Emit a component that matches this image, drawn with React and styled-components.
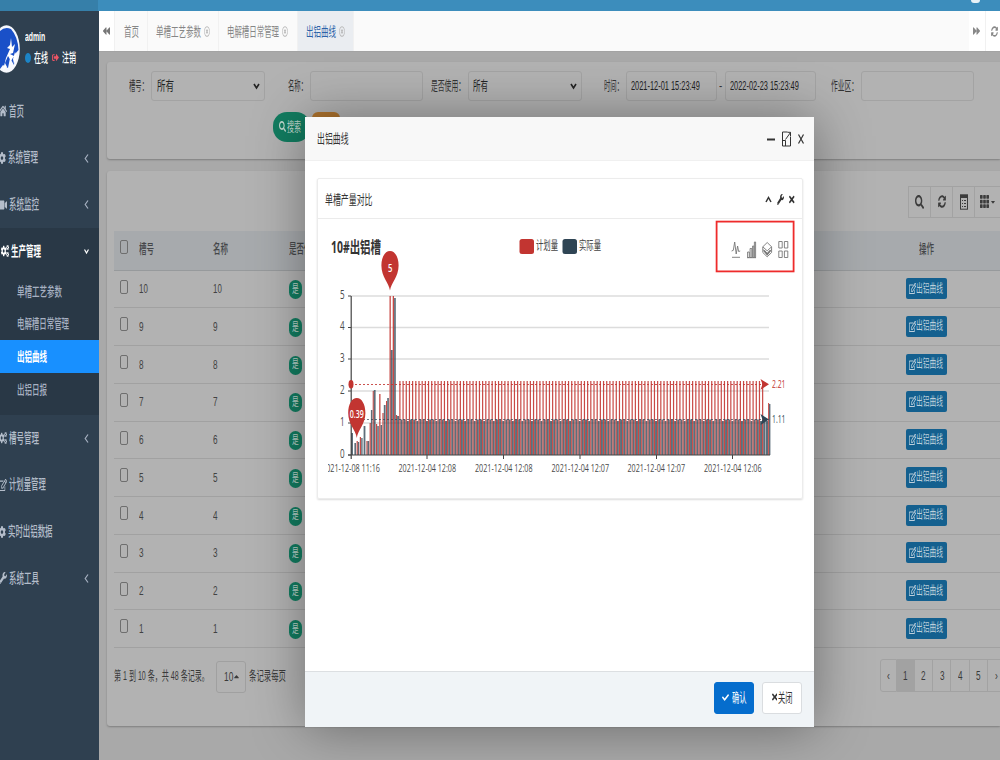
import React, { useLayoutEffect, useRef, useState } from 'react';
import styled, { createGlobalStyle, css } from 'styled-components';
import {
  FaHome, FaCog, FaCogs, FaVideo, FaRegEdit, FaWrench, FaSearch, FaCheck, FaTimes,
  FaRegTimesCircle, FaBackward, FaForward, FaSyncAlt, FaTh, FaSignOutAlt,
  FaCaretUp, FaCaretDown,
} from 'react-icons/fa';

const sans = '"Liberation Sans", "Noto Sans CJK SC", sans-serif';
const chartFont = '"Open Sans", "Noto Sans CJK SC", sans-serif';

const Global = createGlobalStyle`
  * { box-sizing: border-box; }
  html, body { margin: 0; padding: 0; }
  body { width: 1000px; height: 760px; overflow: hidden; font-family: ${sans}; background: #aaa; }
  svg { display: block; flex: none; }
`;

/* Condensed label: the text is scaled horizontally to the given width. */
const LabelBox = styled.span`
  display: inline-block;
  flex: none;
  width: ${(p) => p.$w}px;
  height: ${(p) => p.$size + 6}px;
  line-height: ${(p) => p.$size + 6}px;
  font-size: ${(p) => p.$size}px;
  font-weight: ${(p) => p.$weight || 400};
  color: ${(p) => p.$color || 'inherit'};
  white-space: nowrap;
`;
const LabelInk = styled.span`
  display: inline-block;
  transform-origin: 0 50%;
`;
function T({ w, size = 13, color, weight, children }) {
  const ref = useRef(null);
  const [k, setK] = useState(0.6);
  useLayoutEffect(() => {
    if (ref.current) setK(w / ref.current.offsetWidth);
  }, [w, children]);
  return (
    <LabelBox $w={w} $size={size} $color={color} $weight={weight}>
      <LabelInk ref={ref} style={{ transform: `scaleX(${k})` }}>{children}</LabelInk>
    </LabelBox>
  );
}
const IconBox = styled.span`
  flex: none;
  width: ${(p) => p.$w}px;
  height: ${(p) => p.$h}px;
  color: ${(p) => p.$color || 'inherit'};
  svg { width: 100%; height: 100%; }
`;
function Icon({ as: Glyph, w = 8, h = 13, color }) {
  return <IconBox $w={w} $h={h} $color={color}><Glyph preserveAspectRatio="none" /></IconBox>;
}

const Screen = styled.div`
  position: relative;
  width: 1000px;
  height: 760px;
  overflow: hidden;
  display: flex;
  flex-direction: column;
`;
const TopBar = styled.header`
  flex: none;
  height: 11px;
  background: linear-gradient(90deg, #367fa9 0 98px, #3c8dbc 98px);
  display: flex;
  justify-content: flex-end;
  padding-right: 20px;
`;
const Badge = styled.span`
  width: 9px;
  height: 3px;
  background: #e8f1f6;
  border-radius: 0 0 5px 5px;
`;
const Body = styled.div`
  flex: 1;
  display: flex;
  min-height: 0;
`;
const Sidebar = styled.aside`
  flex: none;
  width: 98.5px;
  background: #2f4050;
  color: #a7b1c2;
  overflow: hidden;
`;
const Profile = styled.div`
  height: 77px;
  display: flex;
  color: #fff;
`;
const Avatar = styled.div`
  margin: 14px 0 0 -7px;
  width: 27px;
  height: 48px;
  flex: none;
`;
const ProfileText = styled.div`
  padding: 16px 0 0 5px;
`;
const StatusLine = styled.div`
  display: flex;
  align-items: center;
  margin-top: 2px;
`;
const Dot = styled.i`
  width: 6px;
  height: 10px;
  border-radius: 50%;
  background: #1c84c6;
  margin-right: 3px;
`;
const Gap = styled.i`
  flex: none;
  width: ${(p) => p.$w}px;
`;
const MenuItem = styled.div`
  height: 46.7px;
  display: flex;
  align-items: center;
  gap: 2px;
  padding-right: 10px;
  margin-left: ${(p) => p.$shift || 0}px;
  color: ${(p) => (p.$active ? '#fff' : '#b4bdca')};
`;
const Group = styled.div`
  height: 187px;
  background: #293846;
`;
const SubItem = styled.div`
  height: 32.7px;
  display: flex;
  align-items: center;
  padding-left: 16.5px;
  color: ${(p) => (p.$active ? '#fff' : '#a7b1c2')};
  background: ${(p) => (p.$active ? '#1890ff' : 'transparent')};
`;
const Push = styled.i`flex: 1;`;

const Main = styled.main`
  flex: 1;
  min-width: 0;
  display: flex;
  flex-direction: column;
`;
const Tabs = styled.nav`
  flex: none;
  height: 40px;
  display: flex;
  background: #fafafa;
  color: #999;
`;
const Tab = styled.div`
  width: ${(p) => p.$w}px;
  flex: none;
  display: flex;
  align-items: center;
  justify-content: center;
  gap: 3px;
  border-right: 1px solid ${(p) => (p.$plain ? 'transparent' : '#f1f1f1')};
  background: ${(p) => (p.$active ? '#eaedf1' : p.$white ? '#fff' : 'transparent')};
  color: ${(p) => (p.$active ? '#2d62a8' : '#868686')};
`;
const Content = styled.section`
  flex: 1;
  background: #a9a9a9;
  padding: 10px 0 0 8.5px;
  display: flex;
  flex-direction: column;
  gap: 12px;
  border-top: 1px solid #a3a3a3;
`;
const panel = css`
  background: #b2b2b2;
  border-radius: 3px 0 0 3px;
  box-shadow: 0 1px 2px rgba(0, 0, 0, 0.25);
`;
const FilterPanel = styled.div`
  ${panel}
  height: 97px;
  padding-top: 9px;
  color: #333;
`;
const FilterRow = styled.div`
  height: 30px;
  display: flex;
  align-items: center;
  padding-left: 22px;
`;
const Field = styled.div`
  width: ${(p) => p.$w}px;
  height: 30px;
  flex: none;
  border: 1px solid #a3a3a3;
  border-radius: 3px;
  display: flex;
  align-items: center;
  padding: 0 4px 1px;
  color: #222;
`;
const FieldLabel = styled.span`
  padding: 0 3px 2px 0;
  display: flex;
`;
const ButtonRow = styled.div`
  display: flex;
  gap: 2px;
  padding: 11px 0 0 166px;
`;
const RoundButton = styled.div`
  width: ${(p) => p.$w}px;
  height: 30px;
  border-radius: ${(p) => p.$r}px;
  background: ${(p) => p.$bg};
  color: #bfd6cd;
  display: flex;
  align-items: center;
  gap: 1px;
  padding: 0 0 2px 6px;
`;
const TablePanel = styled.div`
  ${panel}
  height: 555px;
  padding-left: 7px;
  display: flex;
  flex-direction: column;
`;
const ToolRow = styled.div`
  height: 59.5px;
  padding: 15px 0 0 794px;
  display: flex;
  flex: none;
`;
const ToolButton = styled.div`
  width: ${(p) => p.$w || 22}px;
  height: 32px;
  flex: none;
  border: 1px solid #a2a2a2;
  border-left-width: ${(p) => (p.$first ? 1 : 0)}px;
  display: flex;
  align-items: center;
  justify-content: center;
  gap: 2px;
  padding-bottom: 1px;
  color: #3c3c3c;
`;
const Row = styled.div`
  flex: none;
  height: ${(p) => (p.$head ? 40 : 37.75)}px;
  background: ${(p) => (p.$head ? '#a7aaad' : 'transparent')};
  border-bottom: 1px solid ${(p) => (p.$head ? '#979a9c' : '#a1a1a1')};
  display: grid;
  grid-template-columns: 25px 74px 76px 574px 126px 1fr;
  align-items: center;
  padding-bottom: ${(p) => (p.$head ? 3 : 0.5)}px;
  color: ${(p) => (p.$head ? '#454749' : '#424242')};
`;
const Check = styled.i`
  width: 8px;
  height: 14px;
  margin: -4px 0 0 6px;
  border: 1px solid #6e6e6e;
  border-radius: 2px;
  display: block;
`;
const Yes = styled.span`
  width: 13px;
  height: 19px;
  border-radius: 7px;
  background: #127c60;
  color: #bfd3cc;
  display: flex;
  align-items: center;
  justify-content: center;
  margin-top: 2px;
`;
const Center = styled.div`
  display: flex;
  justify-content: center;
`;
const CurveButton = styled.span`
  width: 41px;
  height: 21px;
  border-radius: 2px;
  background: #14608f;
  color: #bccfdc;
  display: flex;
  align-items: center;
  justify-content: center;
`;
const TableFoot = styled.div`
  display: flex;
  align-items: center;
  height: 54px;
  color: #3a3a3a;
`;
const SizeButton = styled.span`
  flex: none;
  width: 30px;
  height: 32px;
  margin: 3px 3px 0 7px;
  border: 1px solid #a0a0a0;
  border-radius: 3px;
  display: flex;
  align-items: center;
  justify-content: center;
  gap: 1px;
`;
const Pager = styled.div`
  display: flex;
  margin-left: 594px;
`;
const PageCell = styled.span`
  width: ${(p) => p.$w || 18.2}px;
  height: 33px;
  flex: none;
  border: 1px solid #a2a2a2;
  border-left-width: ${(p) => (p.$first ? 1 : 0)}px;
  background: ${(p) => (p.$active ? '#a2a2a2' : 'transparent')};
  border-radius: ${(p) => (p.$first ? '3px 0 0 3px' : 0)};
  display: flex;
  align-items: center;
  justify-content: center;
`;

const Modal = styled.div`
  position: absolute;
  left: 305px;
  top: 117px;
  width: 509px;
  height: 610px;
  background: #fff;
  display: flex;
  flex-direction: column;
  box-shadow: 1px 1px 50px rgba(0, 0, 0, 0.38);
  color: #333;
`;
const ModalTitle = styled.div`
  flex: none;
  height: 44px;
  background: #f8f8f8;
  border-bottom: 1px solid #f0f0f0;
  display: flex;
  align-items: center;
  padding: 0 9px 0 11.5px;
`;
const ModalBody = styled.div`
  flex: 1;
  padding: 17px 11px 0 12px;
`;
const Card = styled.div`
  height: 321px;
  border: 1px solid #ececec;
  border-radius: 2px;
  box-shadow: 0 1px 2px rgba(0, 0, 0, 0.14);
`;
const CardHead = styled.div`
  height: 40px;
  border-bottom: 1px solid #ebebeb;
  display: flex;
  align-items: center;
  padding: 2px 7.5px 0 7px;
`;
const ModalFoot = styled.div`
  flex: none;
  height: 56px;
  background: #f0f4f7;
  border-top: 1px solid #dcdfe2;
  display: flex;
  justify-content: flex-end;
  align-items: center;
  gap: 8px;
  padding: 0 12px 3px 0;
`;
const FootButton = styled.div`
  width: 40px;
  height: 32px;
  border-radius: 3px;
  display: flex;
  align-items: center;
  justify-content: center;
  gap: 1px;
  padding-bottom: 2px;
  background: ${(p) => (p.$primary ? '#056dcd' : '#fff')};
  color: ${(p) => (p.$primary ? '#fff' : '#333')};
  border: 1px solid ${(p) => (p.$primary ? '#056dcd' : '#dadde0')};
`;

const Chevron = ({ down, color = '#a7b1c2' }) => (
  <svg width="5" height="9" viewBox="0 0 5 9" fill="none" stroke={color} strokeWidth="1.2">
    {down ? <path d="M.5 2.5 2.5 6 4.5 2.5" /> : <path d="M4 .5 1.2 4.5 4 8.5" />}
  </svg>
);
const SelectArrow = () => (
  <svg width="7" height="8" viewBox="0 0 7 8" fill="none" stroke="#222" strokeWidth="1.6">
    <path d="M1 2 3.5 6 6 2" />
  </svg>
);

const RED = '#c23531';
const DARK = '#2f4554';
const BASE = 455;

const BARS = [
  [351, 2, 433, 'd'], [354.4, 1.6, 443, 'd'], [356.6, 1.2, 441, 'r'], [357.8, 1.4, 442, 'd'],
  [359.8, 1.2, 437, 'r'], [361.2, 1.4, 438, 'd'], [363.6, 1.8, 426, 'd'], [366.4, 1.2, 441, 'r'],
  [367.6, 1.6, 441, 'd'], [369.6, 1.2, 423, 'r'], [370.9, 1.5, 410, 'd'], [372.7, 1.1, 391, 'r'],
  [373.8, 1.8, 390, 'd'], [376, 1.2, 424, 'r'], [377.3, 1.5, 426, 'd'], [379.2, 1.3, 394, 'r'],
  [380.6, 1.4, 425, 'd'], [382.4, 1.2, 413, 'r'], [383.8, 1.8, 405, 'd'], [386, 1.1, 401, 'r'],
  [387.2, 1.7, 398, 'd'], [389.5, 1.3, 296, 'r'], [390.8, 1.9, 350, 'd'], [392.7, 1.3, 296, 'r'],
  [394.1, 1.7, 298, 'd'], [395.9, 1.2, 415, 'r'], [397.1, 2, 416, 'd'],
];
for (let i = 0; i < 115; i++) {
  const x = 399.3 + i * 3.182;
  BARS.push([x, 1.2, 381, 'r'], [x + 1.2, 1.95, i % 3 === 2 ? 421 : 419.5, 'd']);
}
BARS.push([765.6, 2.4, 421, 'd'], [768.1, 1, 403, 'r'], [769, 1.4, 404, 'd']);

/* Chart text, scaled horizontally to the given width. */
function Txt({ x, y, w, children, size = 11.5, fill = '#4a4a4a', weight }) {
  const ref = useRef(null);
  const [k, setK] = useState(0.6);
  useLayoutEffect(() => {
    if (ref.current) setK(w / ref.current.getComputedTextLength());
  }, [w, children]);
  return (
    <text ref={ref} transform={`translate(${x} ${y}) scale(${k} 1)`} fontSize={size} fill={fill} fontWeight={weight}>
      {children}
    </text>
  );
}

function Chart() {
  return (
    <svg width="484" height="279" viewBox="318 219 484 279" fontFamily={chartFont}>
      <Txt x={331} y={253} w={50} size={16} fill="#333" weight={700}>10#出铝槽</Txt>
      <rect x="519.5" y="239" width="14.5" height="15" rx="2.5" fill={RED} />
      <Txt x={536} y={250} w={22} size={12.5} fill="#444">计划量</Txt>
      <rect x="562.5" y="239" width="14.5" height="15" rx="2.5" fill={DARK} />
      <Txt x={579} y={250} w={22} size={12.5} fill="#444">实际量</Txt>

      {[296, 327.5, 359, 391, 423].map((y) => (
        <path key={y} d={`M351 ${y}H769`} stroke="#dcdcdc" strokeWidth="1.3" />
      ))}
      {BARS.map(([x, w, top, s], i) => (
        <rect key={i} x={x} y={top} width={w} height={BASE - top} fill={s === 'r' ? RED : DARK} opacity={s === 'r' ? 0.9 : 0.78} />
      ))}
      <path d="M351 384.5H764" stroke={RED} strokeDasharray="2 2" opacity="0.85" />
      <path d="M351 419.5H764" stroke={DARK} strokeDasharray="2 2" opacity="0.7" />
      <path d="M351.2 296V459M348 455H770" stroke="#444" strokeWidth="1.2" fill="none" />
      {[296, 327.5, 359, 391, 423, 455].map((y, i) => (
        <g key={y}>
          <path d={`M348 ${y}h3`} stroke="#444" />
          <Txt x={340} y={y + 2.5} w={4.6} size={12}>{5 - i}</Txt>
        </g>
      ))}
      {[427, 503.5, 580, 656.5, 732.5].map((x) => (
        <path key={x} d={`M${x} 455v4`} stroke="#444" />
      ))}
      <clipPath id="axis-clip"><rect x="328" y="455" width="474" height="30" /></clipPath>
      <g clipPath="url(#axis-clip)">
        <Txt x={322} y={472} w={58}>2021-12-08 11:16</Txt>
        <Txt x={398.5} y={472} w={57.5}>2021-12-04 12:08</Txt>
        <Txt x={475} y={472} w={57.5}>2021-12-04 12:08</Txt>
        <Txt x={551.5} y={472} w={57.5}>2021-12-04 12:07</Txt>
        <Txt x={627.5} y={472} w={57.5}>2021-12-04 12:07</Txt>
        <Txt x={704} y={472} w={57.5}>2021-12-04 12:06</Txt>
      </g>
      <ellipse cx="351" cy="384.3" rx="2.5" ry="4.2" fill={RED} />
      <ellipse cx="351.3" cy="419.5" rx="1.6" ry="3" fill={DARK} />
      <path d="M760.5 379 769 384.3 760.5 389.8 762.5 384.3Z" fill={RED} />
      <path d="M760.5 414 769 419.5 760.5 425 762.5 419.5Z" fill={DARK} />
      <Txt x={772} y={387.5} w={13.5} fill={RED}>2.21</Txt>
      <Txt x={772} y={422.8} w={13.5} fill={DARK}>1.11</Txt>
      <path d="M390 290.5C389 283 381.4 277 381.4 265.5C381.4 257 385 251 390 251S398.6 257 398.6 265.5C398.6 277 391 283 390 290.5Z" fill={RED} />
      <Txt x={387.9} y={272} w={4.4} fill="#fff" weight={600}>5</Txt>
      <path d="M356.8 438C355.8 430 348.2 424 348.2 413C348.2 404 352 398 356.8 398S365.4 404 365.4 413C365.4 424 357.8 430 356.8 438Z" fill={RED} />
      <Txt x={349.8} y={418} w={14} fill="#fff" weight={600}>0.39</Txt>

      <rect x="716.6" y="221.6" width="77" height="49.8" fill="none" stroke="#ee2b2b" strokeWidth="1.8" />
      <g fill="none" stroke="#777" strokeWidth="0.9">
        <path d="M731.6 251 733.3 250.3 734.7 242 736.2 254 737.6 246 738.6 251.5 740.2 251M732 257.3H740" />
        <path d="M747.6 257.5V252H749.3V257.5ZM750.1 257.5V248.5H751.8V257.5ZM752.6 257.5V246H753.8V257.5ZM754.4 257.5V242H755.6V257.5ZM747 257.7H756" />
        <path d="M767.2 242.5 771.6 246.8 767.2 250.8 762.8 246.8ZM762.8 249.5 767.2 253.5 771.6 249.5M762.8 252.5 767.2 256.8 771.6 252.5M762.8 246.8V252.5M771.6 246.8V252.5" />
        <path d="M764 250.5 767.2 254.4 770.4 250.5" strokeWidth="1.8" />
        <path d="M778.8 241.5H782.2V248H778.8ZM784.4 241.5H787.8V248H784.4ZM778.8 251H782.2V257.5H778.8ZM784.4 251H787.8V257.5H784.4Z" />
      </g>
    </svg>
  );
}

const SideLink = ({ icon, w, shift, text, arrow = true }) => (
  <MenuItem $shift={shift}>
    <Icon as={icon} w={8} h={12} />
    <T w={w} size={13.5} weight={500}>{text}</T>
    <Push />
    {arrow && <Chevron />}
  </MenuItem>
);

export default function App() {
  return (
    <Screen>
      <Global />
      <TopBar><Badge /></TopBar>
      <Body>
        <Sidebar>
          <Profile>
            <Avatar>
              <svg width="27" height="48" viewBox="0 0 27 48">
                <ellipse cx="13.5" cy="24" rx="13.3" ry="23.7" fill="#f6f8fd" />
                <path d="M3 12Q9 0 18 4Q25 12 25.5 25L22 29 21 40 17 33 15 43 10 40 7 44 2 34Z" fill="#1a50c8" />
                <path d="M18 13 19 22 22 19 20 28 17 29 21 31 18 36 15 31 12 38 14 42 10 45 13 33 17 24 14 23 17 20ZM22 27 24 32 21 39 20 34Z" fill="#fff" />
              </svg>
            </Avatar>
            <ProfileText>
              <T w={20} size={12} weight={700}>admin</T>
              <StatusLine>
                <Dot />
                <T w={14} weight={500}>在线</T>
                <Gap $w={4} />
                <Icon as={FaSignOutAlt} w={7} h={9} color="#ed5565" />
                <Gap $w={3} />
                <T w={14} weight={500}>注销</T>
              </StatusLine>
            </ProfileText>
          </Profile>
          <SideLink icon={FaHome} text="首页" w={15} shift={-1.5} arrow={false} />
          <SideLink icon={FaCog} text="系统管理" w={30} shift={-2} />
          <SideLink icon={FaVideo} text="系统监控" w={30} shift={-1} />
          <Group>
            <MenuItem $active $shift={1}>
              <Icon as={FaCogs} w={8} h={12} />
              <T w={30} size={13.5} weight={700}>生产管理</T>
              <Push />
              <Chevron down color="#fff" />
            </MenuItem>
            <SubItem><T w={45} weight={500}>单槽工艺参数</T></SubItem>
            <SubItem><T w={52} weight={500}>电解槽日常管理</T></SubItem>
            <SubItem $active><T w={30} weight={700}>出铝曲线</T></SubItem>
            <SubItem><T w={30} weight={500}>出铝日报</T></SubItem>
          </Group>
          <SideLink icon={FaCogs} text="槽号管理" w={30} shift={-1} />
          <SideLink icon={FaRegEdit} text="计划量管理" w={37} shift={-1.5} arrow={false} />
          <SideLink icon={FaCog} text="实时出铝数据" w={44.5} shift={-2} arrow={false} />
          <SideLink icon={FaWrench} text="系统工具" w={30} shift={-1.5} />
        </Sidebar>
        <Main>
          <Tabs>
            <Tab $w={16.5} $white><Icon as={FaBackward} w={7} h={10} color="#777" /></Tab>
            <Tab $w={33}><T w={15}>首页</T></Tab>
            <Tab $w={70.5}><T w={45}>单槽工艺参数</T><Icon as={FaRegTimesCircle} w={6} h={11} color="#b4b4b4" /></Tab>
            <Tab $w={79}><T w={52}>电解槽日常管理</T><Icon as={FaRegTimesCircle} w={6} h={11} color="#b4b4b4" /></Tab>
            <Tab $w={56.5} $active><T w={30}>出铝曲线</T><Icon as={FaRegTimesCircle} w={6} h={11} color="#b4b4b4" /></Tab>
            <Push />
            <Tab $w={17} $white><Icon as={FaForward} w={7} h={10} color="#888" /></Tab>
            <Tab $w={14.5} $white $plain><Gap $w={1} /><Icon as={FaSyncAlt} w={7} h={11} color="#888" /></Tab>
          </Tabs>
          <Content>
            <FilterPanel>
              <FilterRow>
                <FieldLabel><T w={19}>槽号：</T></FieldLabel>
                <Field $w={114}><Gap $w={1} /><T w={17}>所有</T><Push /><SelectArrow /></Field>
                <Gap $w={23} /><FieldLabel><T w={19}>名称：</T></FieldLabel>
                <Field $w={113} />
                <Gap $w={8} /><FieldLabel><T w={34}>是否使用：</T></FieldLabel>
                <Field $w={114}><T w={15}>所有</T><Push /><SelectArrow /></Field>
                <Gap $w={22} /><FieldLabel><T w={19}>时间：</T></FieldLabel>
                <Field $w={91}><T w={69}>2021-12-01 15:23:49</T></Field>
                <Gap $w={1.5} /><FieldLabel><T w={3}>-</T></FieldLabel>
                <Field $w={91}><T w={69}>2022-02-23 15:23:49</T></Field>
                <Gap $w={15} /><FieldLabel><T w={27}>作业区：</T></FieldLabel>
                <Field $w={113} />
              </FilterRow>
              <ButtonRow>
                <RoundButton $w={37} $r={14} $bg="#127c60"><Icon as={FaSearch} w={7} h={11} /><T w={14}>搜索</T></RoundButton>
                <RoundButton $w={28} $r={6} $bg="#ae732e" />
              </ButtonRow>
            </FilterPanel>
            <TablePanel>
              <ToolRow>
                <ToolButton $first $w={23}><Icon as={FaSearch} w={9} h={14} /></ToolButton>
                <ToolButton><Icon as={FaSyncAlt} w={8} h={13} /></ToolButton>
                <ToolButton>
                  <svg width="8" height="16" viewBox="0 0 8 16" fill="none" stroke="#3c3c3c">
                    <rect x=".5" y=".8" width="7" height="14.4" />
                    <path d="M0 2.5H8" strokeWidth="3" />
                    <path d="M2 6.5H3M4 6.5H6M2 9.5H3M4 9.5H6M2 12.5H3M4 12.5H6" />
                  </svg>
                </ToolButton>
                <ToolButton $w={26}><Icon as={FaTh} w={9} h={15} /><Icon as={FaCaretDown} w={4} h={8} /></ToolButton>
              </ToolRow>
              <Row $head>
                <Check />
                <T w={15} weight={500}>槽号</T>
                <T w={15} weight={500}>名称</T>
                <T w={30} weight={500}>是否使用</T>
                <Center><T w={15} weight={500}>操作</T></Center>
              </Row>
              {[10, 9, 8, 7, 6, 5, 4, 3, 2, 1].map((n) => (
                <Row key={n}>
                  <Check />
                  <T w={n === 10 ? 8.5 : 4.4}>{n}</T>
                  <T w={n === 10 ? 8.5 : 4.4}>{n}</T>
                  <Yes><T w={7} size={11.5}>是</T></Yes>
                  <Center><CurveButton><Icon as={FaRegEdit} w={7.5} h={11} /><T w={27} size={12}>出铝曲线</T></CurveButton></Center>
                </Row>
              ))}
              <TableFoot>
                <T w={95}>第 1 到 10 条，共 48 条记录。</T>
                <SizeButton><T w={9}>10</T><Icon as={FaCaretUp} w={5} h={9} /></SizeButton>
                <T w={37}>条记录每页</T>
                <Pager>
                  <PageCell $first $w={17}><T w={2.6}>‹</T></PageCell>
                  <PageCell $active $w={18}><T w={4.4}>1</T></PageCell>
                  <PageCell><T w={4.4}>2</T></PageCell>
                  <PageCell><T w={4.4}>3</T></PageCell>
                  <PageCell><T w={4.4}>4</T></PageCell>
                  <PageCell><T w={4.4}>5</T></PageCell>
                  <PageCell><T w={2.6}>›</T></PageCell>
                </Pager>
              </TableFoot>
            </TablePanel>
          </Content>
        </Main>
      </Body>

      <Modal>
        <ModalTitle>
          <T w={31.5}>出铝曲线</T>
          <Push />
          <svg width="38" height="16" viewBox="0 0 38 16" fill="none" stroke="#333">
            <path d="M0 8.5H8" strokeWidth="2" />
            <path d="M20.5 1H15.5V15H23.5V6M15.5 9.5H18.5V15M18.5 8.5 23.5 1.5M20.5 1.3H23.5V5.5" strokeWidth="1" />
            <path d="M31.5 3.5 36.5 12.5M36.5 3.5 31.5 12.5" strokeWidth="1.2" />
          </svg>
        </ModalTitle>
        <ModalBody>
          <Card>
            <CardHead>
              <T w={47.5}>单槽产量对比</T>
              <Push />
              <svg width="7" height="9" viewBox="0 0 7 9" fill="none" stroke="#333" strokeWidth="1.5"><path d="M1 7 3.5 2.5 6 7" /></svg>
              <Gap $w={5} />
              <Icon as={FaWrench} w={7} h={11} />
              <Gap $w={5} />
              <Icon as={FaTimes} w={5.5} h={11} />
            </CardHead>
            <Chart />
          </Card>
        </ModalBody>
        <ModalFoot>
          <FootButton $primary><Icon as={FaCheck} w={7} h={9} /><Gap $w={0.5} /><T w={14.5}>确认</T></FootButton>
          <FootButton><Icon as={FaTimes} w={5.5} h={10} /><T w={14.5}>关闭</T></FootButton>
        </ModalFoot>
      </Modal>
    </Screen>
  );
}
